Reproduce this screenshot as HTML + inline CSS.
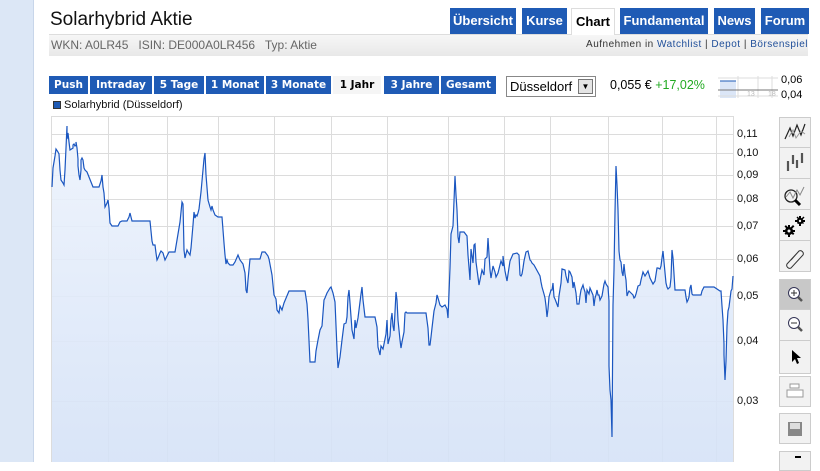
<!DOCTYPE html><html><head><meta charset="utf-8"><style>
*{margin:0;padding:0;box-sizing:border-box}
body{width:820px;height:462px;overflow:hidden;background:#fff;font-family:"Liberation Sans",sans-serif;position:relative}
.a{position:absolute}
.tab{position:absolute;top:8px;height:26px;background:#1f5bb5;color:#fff;font-weight:bold;font-size:13px;line-height:26px;text-align:center}
.b{position:absolute;top:76px;height:18px;background:#1f5bb5;color:#fff;font-weight:bold;line-height:18px;text-align:center;font-family:"DejaVu Sans",sans-serif;font-size:10.5px}
.yl{position:absolute;left:737px;font-size:11px;color:#111}
.tb{position:absolute;left:779px;width:32px;background:#f2f2f2;border:1px solid #ccc}
</style></head><body>
<div class="a" style="left:0;top:0;width:34px;height:462px;background:#dce7f6;border-right:1px solid #c8d6ea"></div>
<div class="a" style="left:50px;top:9px;font-size:19px;color:#111">Solarhybrid Aktie</div>
<div class="a" style="left:49px;top:34px;width:759px;height:22px;background:linear-gradient(#f6f6f6,#e8e8e8);border-top:1px solid #ddd"></div>
<div class="a" style="left:51px;top:38px;font-size:12px;color:#666">WKN: A0LR45 &nbsp; ISIN: DE000A0LR456 &nbsp; Typ: Aktie</div>
<div class="a" style="right:12px;top:39px;font-size:10px;color:#333;white-space:nowrap;letter-spacing:0.5px">Aufnehmen in <span style="color:#1f4e99">Watchlist</span> | <span style="color:#1f4e99">Depot</span> | <span style="color:#1f4e99">Börsenspiel</span></div>
<div class="tab" style="left:450px;width:66px">Übersicht</div>
<div class="tab" style="left:522px;width:45px">Kurse</div>
<div class="tab" style="left:571px;width:44px;background:#fff;color:#000;border:1px solid #ddd;border-bottom:none;height:27px">Chart</div>
<div class="tab" style="left:620px;width:88px">Fundamental</div>
<div class="tab" style="left:714px;width:41px">News</div>
<div class="tab" style="left:761px;width:48px">Forum</div>
<div class="b" style="left:49px;width:39px">Push</div>
<div class="b" style="left:90px;width:62px">Intraday</div>
<div class="b" style="left:154px;width:50px">5 Tage</div>
<div class="b" style="left:206px;width:58px">1 Monat</div>
<div class="b" style="left:266px;width:65px">3 Monate</div>
<div class="b" style="left:333px;width:48px;background:#f5f5f5;color:#000">1 Jahr</div>
<div class="b" style="left:384px;width:55px">3 Jahre</div>
<div class="b" style="left:441px;width:55px">Gesamt</div>
<div class="a" style="left:506px;top:76px;width:90px;height:21px;border:1px solid #888;font-size:13px;line-height:19px;padding-left:3px">Düsseldorf<div class="a" style="right:2px;top:2px;width:15px;height:15px;background:#e4e4e4;border:1px solid #777;font-size:8px;line-height:13px;text-align:center">▼</div></div>
<div class="a" style="left:610px;top:78px;font-size:12.5px">0,055 € <span style="color:#22aa22">+17,02%</span></div>
<svg class="a" style="left:718px;top:76px" width="62" height="22"><rect x="2" y="5" width="16" height="17" fill="#dbe6f7"/><g stroke="#ddd"><line x1="0" y1="2" x2="60" y2="2"/><line x1="0" y1="20" x2="60" y2="20"/><line x1="20" y1="0" x2="20" y2="22"/><line x1="40" y1="0" x2="40" y2="22"/><line x1="54" y1="0" x2="54" y2="22"/></g><line x1="0" y1="14" x2="60" y2="14" stroke="#777"/><line x1="2" y1="5" x2="18" y2="5" stroke="#1f5bb5"/><text x="29" y="20" font-size="7" fill="#bbb">13</text><text x="50" y="20" font-size="7" fill="#bbb">18</text></svg>
<div class="a" style="left:781px;top:74px;font-size:11px">0,06</div>
<div class="a" style="left:781px;top:89px;font-size:11px">0,04</div>
<div class="a" style="left:53px;top:101px;width:8px;height:8px;background:#1f5bb5;border:1px solid #333"></div>
<div class="a" style="left:64px;top:99px;font-size:11px;color:#111">Solarhybrid (Düsseldorf)</div>
<svg class="a" style="left:0;top:0" width="820" height="462">
<defs><linearGradient id="g" x1="0" y1="0" x2="0" y2="1"><stop offset="0" stop-color="#edf3fc"/><stop offset="1" stop-color="#d5e2f7"/></linearGradient></defs>
<g stroke="#dcdcdc" stroke-width="1"><rect x="51.5" y="116.5" width="682" height="350" fill="none"/>
<path d="M108.5 116V462M167.5 116V462M218.5 116V462M274.5 116V462M331.5 116V462M387.5 116V462M448.5 116V462M504.5 116V462M550.5 116V462M608.5 116V462M662.5 116V462M716.5 116V462M51 134.5H733M51 153.5H733M51 175.5H733M51 199.5H733M51 226.5H733M51 259.5H733M51 296.5H733M51 341.5H733M51 401.5H733"/></g>
<polygon fill="url(#g)" opacity="0.9" points="52,462 52,187 53,168 55,156 56,149 58,152 59,154 60,170 61,180 63,183 64,185 65,170 66,148 67,126 67,139 68,133 69,142 70,150 73,148 73,145 74,144 75,146 76,145 76,142 77,148 78,159 78,166 79,175 80,180 81,170 81,160 82,158 83,160 84,168 85,170 87,172 89,177 93,187 99,187 101,181 102,175 103,187 104,193 105,207 107,203 108,200 109,208 110,223 112,226 118,226 120,222 122,221 127,221 129,217 130,213 131,217 132,221 150,221 151,231 152,241 153,245 155,245 156,253 157,260 158,258 160,253 161,251 163,253 165,260 167,256 169,252 175,252 180,222 182,202 183,204 184,250 185,258 187,250 188,252 190,255 191,248 193,225 194,212 195,218 196,215 197,216 198,213 199,209 201,192 204,159 205,153 206,175 208,200 210,207 211,210 212,206 213,210 215,215 218,217 222,217 223,230 224,243 225,255 226,264 227,260 228,263 230,265 233,265 235,262 238,255 240,260 243,264 245,273 246,290 247,293 248,280 250,259 260,259 262,252 265,252 268,256 269,259 272,275 274,295 276,299 277,310 279,313 280,306 282,310 284,303 289,291 305,291 307,304 308,319 310,362 315,362 316,351 318,340 320,330 322,326 324,300 325,298 327,293 330,288 331,287 333,293 335,302 337,349 338,368 340,357 342,340 344,324 346,323 347,317 348,297 349,290 350,303 352,330 354,339 355,320 356,328 358,318 360,302 361,294 362,287 363,300 365,317 375,317 377,327 378,347 380,355 381,346 383,349 386,334 387,320 388,344 390,336 391,320 392,313 393,326 394,331 395,312 396,292 397,300 398,320 400,340 401,348 402,342 404,332 405,313 406,312 407,313 426,313 428,328 429,345 430,345 431,337 432,328 434,311 436,303 437,295 438,298 440,305 442,307 445,305 447,309 448,318 449,293 450,268 451,234 453,226 455,176 456,195 457,210 458,237 459,243 460,232 464,232 467,236 468,255 470,280 471,249 473,263 474,245 475,244 476,262 478,277 479,285 482,270 484,275 485,259 487,257 488,238 490,270 491,278 493,266 495,272 496,277 498,273 499,269 501,261 503,266 503,256 505,271 507,281 510,261 513,254 517,253 519,255 520,275 521,276 522,274 523,268 524,261 526,252 528,251 530,260 531,261 532,263 534,265 540,276 541,282 542,287 544,294 545,298 546,306 547,317 548,309 549,297 551,290 552,290 553,283 554,297 555,299 558,307 559,296 561,283 562,269 565,270 566,276 567,280 568,283 569,271 570,272 572,277 573,288 574,282 576,293 577,304 579,304 580,296 581,290 583,285 584,289 585,292 586,303 587,290 589,294 590,288 593,295 594,306 595,298 596,295 597,290 598,295 599,295 600,300 602,296 604,284 605,281 606,284 608,287 609,301 609,366 610,390 611,400 612,437 613,305 614,270 615,212 616,166 617,185 618,210 619,251 620,260 621,262 622,272 623,276 624,264 625,274 626,280 627,296 628,293 629,291 631,293 633,295 634,298 635,297 636,294 638,286 640,285 641,280 643,272 645,276 648,271 650,278 653,284 655,281 657,268 658,268 660,269 661,266 662,258 663,251 664,262 666,283 667,287 668,289 670,287 671,278 672,250 673,258 674,274 675,290 685,290 686,297 687,302 688,300 689,297 690,288 691,285 692,294 693,295 701,295 702,291 704,287 714,287 720,291 721,291 722,306 723,320 724,344 724,355 725,380 726,361 727,326 728,311 729,307 731,291 732,289 733,276 733,462"/>
<polyline fill="none" stroke="#1a56c0" stroke-width="1.2" points="52,187 53,168 55,156 56,149 58,152 59,154 60,170 61,180 63,183 64,185 65,170 66,148 67,126 67,139 68,133 69,142 70,150 73,148 73,145 74,144 75,146 76,145 76,142 77,148 78,159 78,166 79,175 80,180 81,170 81,160 82,158 83,160 84,168 85,170 87,172 89,177 93,187 99,187 101,181 102,175 103,187 104,193 105,207 107,203 108,200 109,208 110,223 112,226 118,226 120,222 122,221 127,221 129,217 130,213 131,217 132,221 150,221 151,231 152,241 153,245 155,245 156,253 157,260 158,258 160,253 161,251 163,253 165,260 167,256 169,252 175,252 180,222 182,202 183,204 184,250 185,258 187,250 188,252 190,255 191,248 193,225 194,212 195,218 196,215 197,216 198,213 199,209 201,192 204,159 205,153 206,175 208,200 210,207 211,210 212,206 213,210 215,215 218,217 222,217 223,230 224,243 225,255 226,264 227,260 228,263 230,265 233,265 235,262 238,255 240,260 243,264 245,273 246,290 247,293 248,280 250,259 260,259 262,252 265,252 268,256 269,259 272,275 274,295 276,299 277,310 279,313 280,306 282,310 284,303 289,291 305,291 307,304 308,319 310,362 315,362 316,351 318,340 320,330 322,326 324,300 325,298 327,293 330,288 331,287 333,293 335,302 337,349 338,368 340,357 342,340 344,324 346,323 347,317 348,297 349,290 350,303 352,330 354,339 355,320 356,328 358,318 360,302 361,294 362,287 363,300 365,317 375,317 377,327 378,347 380,355 381,346 383,349 386,334 387,320 388,344 390,336 391,320 392,313 393,326 394,331 395,312 396,292 397,300 398,320 400,340 401,348 402,342 404,332 405,313 406,312 407,313 426,313 428,328 429,345 430,345 431,337 432,328 434,311 436,303 437,295 438,298 440,305 442,307 445,305 447,309 448,318 449,293 450,268 451,234 453,226 455,176 456,195 457,210 458,237 459,243 460,232 464,232 467,236 468,255 470,280 471,249 473,263 474,245 475,244 476,262 478,277 479,285 482,270 484,275 485,259 487,257 488,238 490,270 491,278 493,266 495,272 496,277 498,273 499,269 501,261 503,266 503,256 505,271 507,281 510,261 513,254 517,253 519,255 520,275 521,276 522,274 523,268 524,261 526,252 528,251 530,260 531,261 532,263 534,265 540,276 541,282 542,287 544,294 545,298 546,306 547,317 548,309 549,297 551,290 552,290 553,283 554,297 555,299 558,307 559,296 561,283 562,269 565,270 566,276 567,280 568,283 569,271 570,272 572,277 573,288 574,282 576,293 577,304 579,304 580,296 581,290 583,285 584,289 585,292 586,303 587,290 589,294 590,288 593,295 594,306 595,298 596,295 597,290 598,295 599,295 600,300 602,296 604,284 605,281 606,284 608,287 609,301 609,366 610,390 611,400 612,437 613,305 614,270 615,212 616,166 617,185 618,210 619,251 620,260 621,262 622,272 623,276 624,264 625,274 626,280 627,296 628,293 629,291 631,293 633,295 634,298 635,297 636,294 638,286 640,285 641,280 643,272 645,276 648,271 650,278 653,284 655,281 657,268 658,268 660,269 661,266 662,258 663,251 664,262 666,283 667,287 668,289 670,287 671,278 672,250 673,258 674,274 675,290 685,290 686,297 687,302 688,300 689,297 690,288 691,285 692,294 693,295 701,295 702,291 704,287 714,287 720,291 721,291 722,306 723,320 724,344 724,355 725,380 726,361 727,326 728,311 729,307 731,291 732,289 733,276"/>
</svg>
<div class="yl" style="top:128px">0,11</div><div class="yl" style="top:147px">0,10</div><div class="yl" style="top:169px">0,09</div><div class="yl" style="top:193px">0,08</div><div class="yl" style="top:220px">0,07</div><div class="yl" style="top:253px">0,06</div><div class="yl" style="top:290px">0,05</div><div class="yl" style="top:335px">0,04</div><div class="yl" style="top:395px">0,03</div>
<div class="tb" style="top:117px;height:155px"></div>
<svg class="a" style="left:779px;top:117px" width="32" height="155">
<g stroke="#ccc"><line x1="0" y1="30.5" x2="32" y2="30.5"/><line x1="0" y1="61.5" x2="32" y2="61.5"/><line x1="0" y1="92.5" x2="32" y2="92.5"/><line x1="0" y1="123.5" x2="32" y2="123.5"/></g>
<path d="M6 22L11 11L14 19L18 8L22 18L26 7" stroke="#222" fill="none" stroke-width="1.2"/><path d="M10 20L14 13L17 21L22 14L26 17" stroke="#999" fill="none"/>
<path d="M9 44v10M14 38v9M18 43v8M23 36v10" stroke="#555" stroke-width="2.2"/>
<circle cx="12" cy="79" r="6" fill="none" stroke="#222" stroke-width="1.3"/><path d="M16 83l5 5" stroke="#000" stroke-width="3"/><path d="M7 80l4-5 3 6 4-8 3 5 4-8" stroke="#888" fill="none"/>
<g fill="#000"><circle cx="10" cy="114" r="4"/><path d="M9 108h2v12h-2zM4 113h12v2H4zM5.5 109.5l1.4-1.4 8.5 8.5-1.4 1.4zM14 108l1.4 1.4-8.5 8.5-1.4-1.4z"/><circle cx="21" cy="104" r="3.2"/><path d="M20 99h2v10h-2zM16 103h10v2H16zM17.5 100.5l1-1 6.5 6.5-1 1zM24.5 99.5l1 1-6.5 6.5-1-1z"/></g>
<circle cx="10" cy="114" r="1.5" fill="#f2f2f2"/><circle cx="21" cy="104" r="1.2" fill="#f2f2f2"/>
<path d="M8 147l12-13a3 3 0 0 1 4 4l-12 13a3 3 0 0 1-4-4z M12 143l8-9" stroke="#333" fill="none"/>
</svg>
<div class="tb" style="top:279px;height:95px;background:#f2f2f2"></div>
<div class="a" style="left:780px;top:280px;width:30px;height:29px;background:#c8c8c8"></div>
<svg class="a" style="left:779px;top:279px" width="32" height="95">
<g stroke="#ccc"><line x1="0" y1="30.5" x2="32" y2="30.5"/><line x1="0" y1="61.5" x2="32" y2="61.5"/></g>
<circle cx="15" cy="14" r="5.5" fill="#fff" stroke="#335" /><path d="M12 14h6M15 11v6" stroke="#333"/><path d="M19 18l4 4" stroke="#555" stroke-width="2.5"/>
<circle cx="15" cy="44" r="5.5" fill="#fff" stroke="#335"/><path d="M12 44h6" stroke="#333"/><path d="M19 48l4 4" stroke="#555" stroke-width="2.5"/>
<path d="M13 71v12l3-3 2 5 2-1-2-5h4z" fill="#000"/>
</svg>
<div class="tb" style="top:376px;height:31px"></div>
<svg class="a" style="left:779px;top:376px" width="32" height="31"><path d="M11 12h9v-4h-9zM8 14h16v7H8z" fill="#fff" stroke="#999"/></svg>
<div class="tb" style="top:413px;height:31px"></div>
<svg class="a" style="left:779px;top:413px" width="32" height="31"><rect x="9" y="9" width="14" height="14" fill="#888"/><rect x="11" y="10" width="10" height="6" fill="#ddd"/></svg>
<div class="tb" style="top:451px;height:20px"></div>
<div class="a" style="left:795px;top:456px;width:6px;height:2px;background:#000"></div>
</body></html>
